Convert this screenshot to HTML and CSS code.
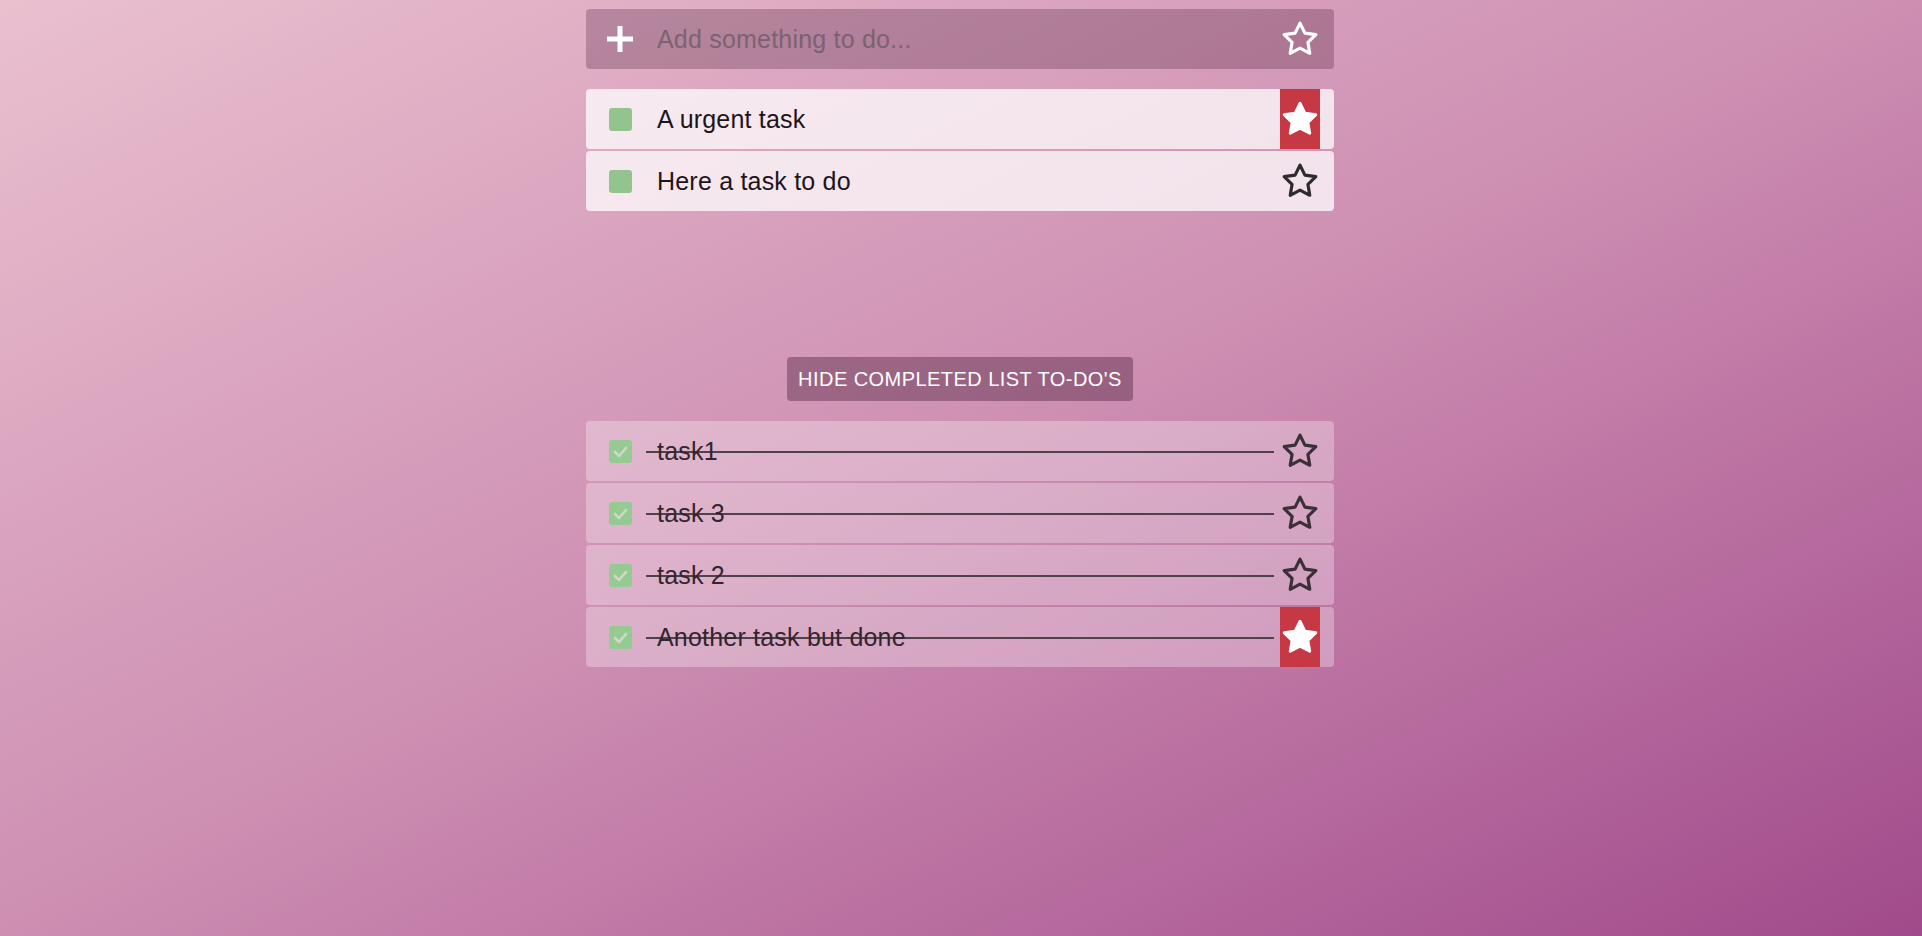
FILE: index.html
```html
<!DOCTYPE html>
<html lang="en">
<head>
<meta charset="utf-8">
<title>To-do list</title>
<link rel="stylesheet" href="styles.css">
</head>
<body>
<main class="app">
  <form class="add-row">
    <span class="add-icon">
      <svg viewBox="0 0 28 28" width="28" height="28"><path d="M14 1v26M1 14h26" stroke="#fff" stroke-width="5" fill="none"/></svg>
    </span>
    <input class="add-input" type="text" placeholder="Add something to do...">
    <span class="star-slot star-light">
      <svg viewBox="0 0 24 24" width="38" height="38"><path d="M12 2l3.09 6.26L22 9.27l-5 4.87 1.18 6.88L12 17.77l-6.18 3.25L7 14.14 2 9.27l6.91-1.01L12 2z"/></svg>
    </span>
  </form>

  <ul class="list">
    <li class="task">
      <span class="check"></span>
      <span class="label">A urgent task</span>
      <span class="star-slot starred">
        <svg viewBox="0 0 24 24" width="38" height="38"><path d="M12 2l3.09 6.26L22 9.27l-5 4.87 1.18 6.88L12 17.77l-6.18 3.25L7 14.14 2 9.27l6.91-1.01L12 2z"/></svg>
      </span>
    </li>
    <li class="task">
      <span class="check"></span>
      <span class="label">Here a task to do</span>
      <span class="star-slot">
        <svg viewBox="0 0 24 24" width="38" height="38"><path d="M12 2l3.09 6.26L22 9.27l-5 4.87 1.18 6.88L12 17.77l-6.18 3.25L7 14.14 2 9.27l6.91-1.01L12 2z"/></svg>
      </span>
    </li>
  </ul>

  <div class="toggle-wrap">
    <button class="toggle" type="button">HIDE COMPLETED LIST TO-DO'S</button>
  </div>

  <ul class="list done-list">
    <li class="task done">
      <span class="check checked"><svg viewBox="0 0 23 23" width="23" height="23"><path d="M6 12l4 4 7-8"/></svg></span>
      <span class="label">task1</span>
      <span class="star-slot">
        <svg viewBox="0 0 24 24" width="38" height="38"><path d="M12 2l3.09 6.26L22 9.27l-5 4.87 1.18 6.88L12 17.77l-6.18 3.25L7 14.14 2 9.27l6.91-1.01L12 2z"/></svg>
      </span>
    </li>
    <li class="task done">
      <span class="check checked"><svg viewBox="0 0 23 23" width="23" height="23"><path d="M6 12l4 4 7-8"/></svg></span>
      <span class="label">task 3</span>
      <span class="star-slot">
        <svg viewBox="0 0 24 24" width="38" height="38"><path d="M12 2l3.09 6.26L22 9.27l-5 4.87 1.18 6.88L12 17.77l-6.18 3.25L7 14.14 2 9.27l6.91-1.01L12 2z"/></svg>
      </span>
    </li>
    <li class="task done">
      <span class="check checked"><svg viewBox="0 0 23 23" width="23" height="23"><path d="M6 12l4 4 7-8"/></svg></span>
      <span class="label">task 2</span>
      <span class="star-slot">
        <svg viewBox="0 0 24 24" width="38" height="38"><path d="M12 2l3.09 6.26L22 9.27l-5 4.87 1.18 6.88L12 17.77l-6.18 3.25L7 14.14 2 9.27l6.91-1.01L12 2z"/></svg>
      </span>
    </li>
    <li class="task done">
      <span class="check checked"><svg viewBox="0 0 23 23" width="23" height="23"><path d="M6 12l4 4 7-8"/></svg></span>
      <span class="label">Another task but done</span>
      <span class="star-slot starred">
        <svg viewBox="0 0 24 24" width="38" height="38"><path d="M12 2l3.09 6.26L22 9.27l-5 4.87 1.18 6.88L12 17.77l-6.18 3.25L7 14.14 2 9.27l6.91-1.01L12 2z"/></svg>
      </span>
    </li>
  </ul>
</main>
</body>
</html>
```

FILE: styles.css
```css
* { box-sizing: border-box; }

html {
  min-height: 100%;
  background: linear-gradient(to bottom right, #eac0cf 0%, #cd8eb2 50%, #a14a8b 100%);
}

body {
  margin: 0;
  min-height: 100vh;
  font-family: "Liberation Sans", Arial, sans-serif;
}

.app {
  width: 748px;
  margin-left: calc(50% - 375px);
  padding-top: 9px;
}

.add-row {
  display: flex;
  align-items: center;
  height: 60px;
  margin: 0;
  padding: 0 14px 0 20px;
  border-radius: 4px;
  background: rgba(45, 5, 30, 0.24);
}

.add-icon {
  display: flex;
  width: 28px;
  height: 28px;
  margin-right: 23px;
}

.add-input {
  flex: 1;
  min-width: 0;
  height: 40px;
  margin-right: 6px;
  padding: 0;
  border: 0;
  outline: 0;
  background: transparent;
  font-family: inherit;
  font-size: 25px;
  letter-spacing: 0.2px;
  color: #3a2a34;
}

.add-input::placeholder {
  color: #7b6270;
  opacity: 1;
}

.list {
  list-style: none;
  margin: 20px 0 0;
  padding: 0;
  display: flex;
  flex-direction: column;
  gap: 2px;
}

.task {
  display: flex;
  align-items: center;
  height: 60px;
  padding: 0 14px 0 23px;
  border-radius: 4px;
  background: rgba(255, 255, 255, 0.74);
  color: #1d151a;
}

.check {
  flex: none;
  display: flex;
  width: 23px;
  height: 23px;
  border-radius: 3px;
  background: #93c48f;
}

.check svg path {
  fill: none;
  stroke: rgba(255, 230, 242, 0.55);
  stroke-width: 2.6;
  stroke-linecap: round;
  stroke-linejoin: round;
}

.label {
  flex: 1;
  min-width: 0;
  margin-left: 14px;
  padding-left: 11px;
  font-size: 25px;
  letter-spacing: 0.2px;
  line-height: 30px;
  white-space: nowrap;
}

.star-slot {
  flex: none;
  display: flex;
  align-items: center;
  justify-content: center;
  width: 40px;
  height: 60px;
  margin-left: 6px;
}

.star-slot svg path {
  fill: none;
  stroke: #2e2a2d;
  stroke-width: 2;
  stroke-linejoin: round;
}

.star-light svg path {
  stroke: #ffffff;
}

.starred {
  background: #c63844;
}

.starred svg path {
  fill: #ffffff;
  stroke: #ffffff;
  stroke-width: 1.8;
}

.toggle-wrap {
  display: flex;
  justify-content: center;
  margin-top: 146px;
}

.toggle {
  height: 44px;
  padding: 0 11px;
  border: 0;
  border-radius: 4px;
  background: rgba(40, 0, 25, 0.32);
  color: #ffffff;
  font-family: inherit;
  font-size: 20px;
  letter-spacing: 0.45px;
  cursor: pointer;
}

.done-list {
  margin-top: 20px;
}

.done {
  background: rgba(255, 255, 255, 0.3);
  color: #33262f;
}

.done .check {
  background: #95cb92;
}

.done .label {
  background: linear-gradient(#4e424b, #4e424b) left calc(50% + 1px) / 100% 2px no-repeat;
}

.done .star-slot svg path {
  stroke: #3a3038;
}

.done .starred svg path {
  stroke: #ffffff;
}
```
